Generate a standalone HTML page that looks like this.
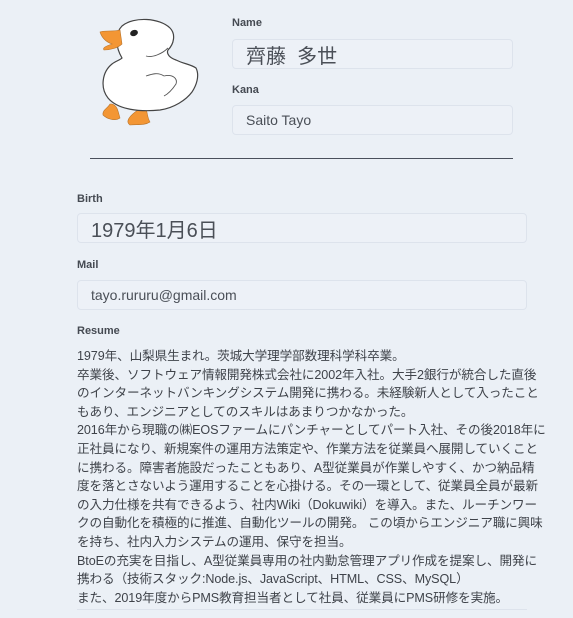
<!DOCTYPE html>
<html><head><meta charset="utf-8"><style>
body{margin:0;background:#ebf0f6;width:573px;height:618px;overflow:hidden;font-family:"Liberation Sans","Noto Sans CJK JP",sans-serif;color:#3b3f46;}
.lbl{position:absolute;font-size:11px;font-weight:bold;color:#454a52;}
.inp{position:absolute;border:1px solid #dde3ec;border-radius:4px;background:#edf1f7;box-sizing:border-box;color:#4a4f57;padding-left:13px;display:flex;align-items:center;}
.res{position:absolute;left:77px;top:347px;font-size:12.6px;line-height:18.6px;white-space:nowrap;color:#3f434a;letter-spacing:-0.1px;}
</style></head><body>
<svg style="position:absolute;left:0;top:0" width="220" height="140" viewBox="0 0 220 140">
<path d="M105 106 C112 102 122 102 130 104" fill="none"/>
<path d="M142 102 C148 106 146 116 150 122 C144 126 136 124 130 125 C124 121 132 114 138 110Z" fill="#f39634" stroke="#b8742c" stroke-width="0.6"/>
<path d="M112 104 C118 106 118 112 120 118 C114 122 106 118 103 115 C102 110 108 108 110 104Z" fill="#f39634" stroke="#b8742c" stroke-width="0.6"/>
<path d="M122 58 C116 48 114 34 122 26 C134 16 160 18 170 28 C176 34 174 44 168 50 C166 54 170 58 176 60 C184 64 190 64 196 68 C200 76 196 86 192 92 C186 100 174 108 160 110 C140 112 118 110 108 98 C100 88 102 72 112 64 C116 61 120 60 122 58Z" fill="#fff" stroke="#444" stroke-width="1.2"/>
<path d="M120 30 C112 32 104 30 100 32 C102 38 106 42 112 44 C106 46 102 48 104 50 C110 50 118 48 122 44Z" fill="#f39634" stroke="#b8742c" stroke-width="0.6"/>
<ellipse cx="134" cy="33" rx="4" ry="3" fill="#222" transform="rotate(-20 134 33)"/>
<path d="M168 48 C162 54 152 58 146 56" stroke="#555" fill="none" stroke-width="0.9"/>
<path d="M164 76 C172 74 178 78 176 84 C172 90 168 94 164 96" stroke="#555" fill="none" stroke-width="0.9"/>
<path d="M146 76 C152 74 158 72 164 76" stroke="#555" fill="none" stroke-width="0.9"/>
</svg>
<div class="lbl" style="left:232px;top:17px">Name</div>
<div class="inp" style="left:232px;top:39px;width:281px;height:30px;font-size:20px;">齊藤&nbsp;&nbsp;多世</div>
<div class="lbl" style="left:232px;top:84px">Kana</div>
<div class="inp" style="left:232px;top:105px;width:281px;height:30px;font-size:14px;">Saito Tayo</div>
<div style="position:absolute;left:90px;top:158px;width:423px;height:1px;background:#4a505c"></div>
<div class="lbl" style="left:77px;top:193px">Birth</div>
<div class="inp" style="left:77px;top:213px;width:450px;height:30px;font-size:20px;">1979年1月6日</div>
<div class="lbl" style="left:77px;top:259px">Mail</div>
<div class="inp" style="left:77px;top:280px;width:450px;height:30px;font-size:14px;">tayo.rururu@gmail.com</div>
<div class="lbl" style="left:77px;top:325px">Resume</div>
<div class="res">1979年、山梨県生まれ。茨城大学理学部数理科学科卒業。<br>卒業後、ソフトウェア情報開発株式会社に2002年入社。大手2銀行が統合した直後<br>のインターネットバンキングシステム開発に携わる。未経験新人として入ったこと<br>もあり、エンジニアとしてのスキルはあまりつかなかった。<br>2016年から現職の㈱EOSファームにパンチャーとしてパート入社、その後2018年に<br>正社員になり、新規案件の運用方法策定や、作業方法を従業員へ展開していくこと<br>に携わる。障害者施設だったこともあり、A型従業員が作業しやすく、かつ納品精<br>度を落とさないよう運用することを心掛ける。その一環として、従業員全員が最新<br>の入力仕様を共有できるよう、社内Wiki（Dokuwiki）を導入。また、ルーチンワー<br>クの自動化を積極的に推進、自動化ツールの開発。 この頃からエンジニア職に興味<br>を持ち、社内入力システムの運用、保守を担当。<br>BtoEの充実を目指し、A型従業員専用の社内勤怠管理アプリ作成を提案し、開発に<br>携わる（技術スタック:Node.js、JavaScript、HTML、CSS、MySQL）<br>また、2019年度からPMS教育担当者として社員、従業員にPMS研修を実施。</div>
<div style="position:absolute;left:77px;top:609px;width:450px;height:1px;background:#dde3ec"></div>
</body></html>
